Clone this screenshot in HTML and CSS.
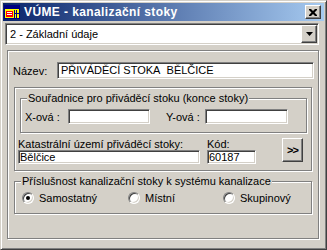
FILE: index.html
```html
<!DOCTYPE html>
<html>
<head>
  <meta http-equiv="content-type" content="text/html; charset=utf-8" />
  <title>VÚME - kanalizační stoky</title>
<link rel="stylesheet" href="styles.css">
</head>

<body>

<div class="window">

  <div class="titlebar">
    <svg class="appicon" width="16" height="16" viewBox="0 0 16 16">
      <rect x="0.5" y="1.5" width="15" height="13" fill="#ffff00" stroke="#000080"/>
      <rect x="1" y="2" width="14" height="3" fill="#000080"/>
      <rect x="2" y="7" width="7" height="6" fill="#ff0000"/>
      <rect x="3" y="8" width="5" height="1" fill="#ffffff"/>
      <rect x="3" y="10" width="5" height="1" fill="#ffffff"/>
      <rect x="10" y="6" width="1" height="8" fill="#000080"/>
      <rect x="12" y="6" width="1" height="8" fill="#000080"/>
      <rect x="10" y="9" width="5" height="1" fill="#000080"/>
    </svg>
    <span class="title">VÚME - kanalizační stoky</span>
    <div class="btn closebtn">
      <svg width="8" height="7" viewBox="0 0 8 7">
        <path d="M0 0h2l2 2 2-2h2v1l-2.5 2.5 2.5 2.5v1h-2l-2-2-2 2h-2v-1l2.5-2.5-2.5-2.5z" fill="#000"/>
      </svg>
    </div>
  </div>

  <div class="combo sunken">
    <span class="combotext">2 - Základní údaje</span>
    <div class="btn dropbtn">
      <svg width="7" height="4" viewBox="0 0 7 4"><path d="M0 0h7l-3.5 4z" fill="#000"/></svg>
    </div>
  </div>

  <div class="panel etched">

    <div class="namerow">
      <span class="namelabel">Název:</span>
      <div class="field sunken nameinput">PŘIVÁDĚCÍ STOKA&nbsp; BĚLČICE</div>
    </div>

    <div class="frame etched">

      <div class="group etched coordgroup">
        <span class="grouptitle">Souřadnice pro přiváděcí stoku (konce stoky)</span>
        <div class="coordrow">
          <span class="xlabel">X-ová :</span>
          <div class="field sunken xinput"></div>
          <span class="ylabel">Y-ová :</span>
          <div class="field sunken yinput"></div>
        </div>
      </div>

      <div class="katrow">
        <div class="katcol">
          <div class="smalllabel">Katastrální území přiváděcí stoky:</div>
          <div class="field sunken katinput">Bělčice</div>
        </div>
        <div class="kodcol">
          <div class="smalllabel">Kód:</div>
          <div class="field sunken kodinput">60187</div>
        </div>
        <div class="btn morebtn">&gt;&gt;</div>
      </div>

    </div>

    <div class="group etched systemgroup">
      <span class="grouptitle">Příslušnost kanalizační stoky k systému kanalizace</span>
      <div class="radiorow">
        <div class="radioitem first"><span class="radio checked"></span>Samostatný</div>
        <div class="radioitem second"><span class="radio"></span>Místní</div>
        <div class="radioitem third"><span class="radio"></span>Skupinový</div>
      </div>
    </div>

  </div>

</div>

</body>
</html>
```

FILE: styles.css
```css
* {
    box-sizing: border-box;
}
body {
    margin: 0;
    background-color: #d4d0c8;
    font-family: "Liberation Sans", Arial, sans-serif;
    font-size: 11px;
    color: #000;
}
.window {
    width: 327px;
    height: 250px;
    padding: 2px;
    border: 1px solid;
    border-color: #d4d0c8 #404040 #404040 #d4d0c8;
    box-shadow: inset 1px 1px #fff, inset -1px -1px #808080;
    background-color: #d4d0c8;
    display: flex;
    flex-direction: column;
}

/* shared 3d borders */
.btn {
    background-color: #d4d0c8;
    border: 1px solid;
    border-color: #fff #404040 #404040 #fff;
    box-shadow: inset -1px -1px #808080;
    display: flex;
    align-items: center;
    justify-content: center;
}
.sunken {
    border: 1px solid;
    border-color: #808080 #fff #fff #808080;
    box-shadow: inset 1px 1px #404040, inset -1px -1px #d4d0c8;
    background-color: #fff;
}
.etched {
    border: 1px solid #808080;
    box-shadow: inset 1px 1px #fff, 1px 1px #fff;
}

/* title bar */
.titlebar {
    height: 18px;
    display: flex;
    align-items: center;
    background: linear-gradient(to right, #0a246a, #a6caf0);
    color: #fff;
    font-size: 12px;
    font-weight: bold;
    letter-spacing: 0.4px;
}
.appicon {
    margin-left: 1px;
    margin-right: 4px;
}
.title {
    white-space: nowrap;
}
.closebtn {
    margin-left: auto;
    margin-right: 3px;
    width: 16px;
    height: 14px;
}

/* combo */
.combo {
    margin: 2px 0 0 2px;
    width: 314px;
    height: 22px;
    padding: 1px;
    display: flex;
    align-items: center;
}
.combotext {
    padding-left: 3px;
    flex: 1;
}
.dropbtn {
    width: 16px;
    height: 18px;
}

/* main panel */
.panel {
    margin: 5px 0 0 4px;
    width: 312px;
    height: 189px;
}
.namerow {
    display: flex;
    align-items: center;
    margin: 11px 0 0 5px;
}
.namelabel {
    width: 44px;
}
.field {
    padding: 0 3px;
    line-height: 13px;
    white-space: nowrap;
    overflow: hidden;
}
.nameinput {
    width: 257px;
    height: 17px;
    line-height: 15px;
}

.frame {
    margin: 8px 0 0 6px;
    width: 298px;
    height: 84px;
}
.group {
    display: flex;
    flex-direction: column;
    align-items: flex-start;
}
.grouptitle {
    margin: -7px 0 0 6px;
    padding: 0 1px;
    line-height: 13px;
    background-color: #d4d0c8;
}
.coordgroup {
    margin: 10px 0 0 5px;
    width: 287px;
    height: 35px;
}
.coordrow {
    display: flex;
    align-items: center;
    margin: 4px 0 0 4px;
}
.xlabel {
    width: 43px;
}
.xinput {
    width: 82px;
    height: 15px;
}
.ylabel {
    margin-left: 16px;
    width: 39px;
}
.yinput {
    width: 83px;
    height: 15px;
}

.katrow {
    display: flex;
    align-items: flex-start;
    margin: 5px 0 0 3px;
}
.smalllabel {
    line-height: 12px;
    white-space: nowrap;
}
.katinput {
    width: 182px;
    height: 14px;
    line-height: 12px;
    padding: 0 1px;
}
.kodcol {
    margin-left: 7px;
}
.kodinput {
    width: 49px;
    height: 14px;
    line-height: 12px;
    padding: 0 1px;
}
.morebtn {
    margin-left: 26px;
    width: 21px;
    height: 24px;
    font-weight: bold;
    letter-spacing: -1px;
}

.systemgroup {
    margin: 10px 0 0 6px;
    width: 298px;
    height: 33px;
}
.radiorow {
    display: flex;
    align-items: center;
    margin: 4px 0 0 7px;
}
.radioitem {
    display: flex;
    align-items: center;
}
.first {
    width: 106px;
}
.second {
    width: 95px;
}
.radio {
    width: 12px;
    height: 12px;
    margin-right: 5px;
    border-radius: 50%;
    border: 1px solid;
    border-color: #808080 #fff #fff #808080;
    box-shadow: inset 1px 1px #404040, inset -1px -1px #d4d0c8;
    background-color: #fff;
    display: flex;
    align-items: center;
    justify-content: center;
}
.radio.checked::after {
    content: "";
    width: 4px;
    height: 4px;
    border-radius: 50%;
    background-color: #000;
}
```
